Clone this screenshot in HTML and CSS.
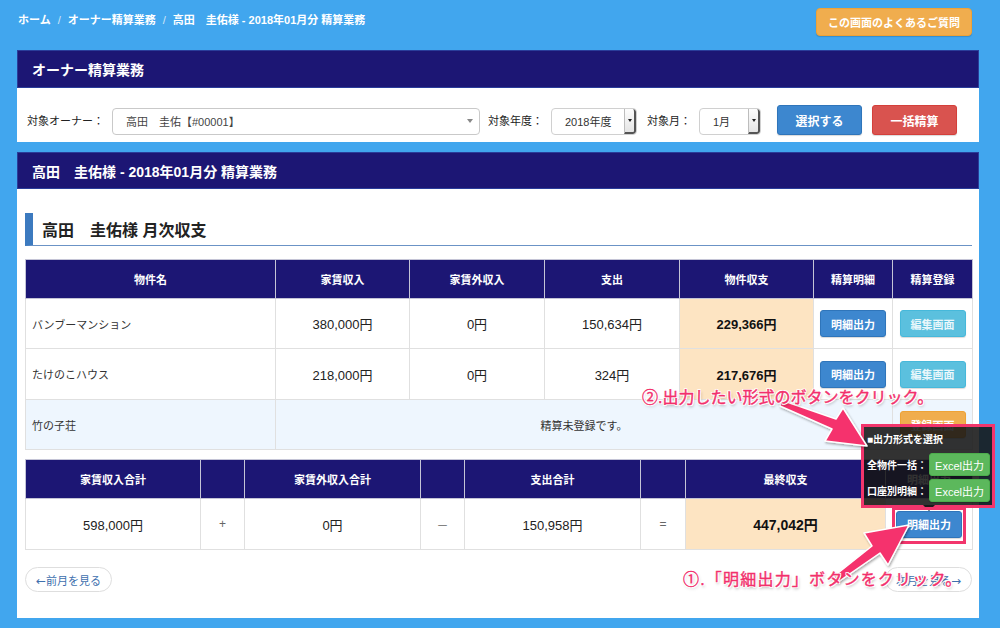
FILE: index.html
```html
<!DOCTYPE html>
<html lang="ja">
<head>
<meta charset="utf-8">
<title>オーナー精算業務</title>
<link rel="stylesheet" href="styles.css">
</head>
<body>
<div class="page">
  <header class="topbar">
    <ol class="crumbs">
      <li>ホーム</li><li class="sep">/</li><li>オーナー精算業務</li><li class="sep">/</li><li>高田　圭佑様 - 2018年01月分 精算業務</li>
    </ol>
    <button class="btn btn-faq">この画面のよくあるご質問</button>
  </header>

  <section class="panel">
    <h2 class="panel-head">オーナー精算業務</h2>
    <div class="filter">
      <span class="flabel">対象オーナー：</span>
      <div class="select owner"><span class="val">高田　圭佑【#00001】</span><span class="caret"></span></div>
      <span class="flabel">対象年度：</span>
      <div class="mselect year"><span class="val">2018年度</span><span class="stepper"></span></div>
      <span class="flabel">対象月：</span>
      <div class="mselect month"><span class="val">1月</span><span class="stepper"></span></div>
      <button class="btn btn-primary btn-lg">選択する</button>
      <button class="btn btn-danger btn-lg">一括精算</button>
    </div>
  </section>

  <section class="panel panel-main">
    <h2 class="panel-head head2">高田　圭佑様 - 2018年01月分 精算業務</h2>
    <div class="panel-body">
      <h3 class="sec-title">高田　圭佑様 月次収支</h3>

      <table class="grid props">
        <colgroup>
          <col style="width:250px"><col style="width:134px"><col style="width:135px"><col style="width:135px"><col style="width:134px"><col style="width:79px"><col style="width:80px">
        </colgroup>
        <thead>
          <tr><th>物件名</th><th>家賃収入</th><th>家賃外収入</th><th>支出</th><th>物件収支</th><th>精算明細</th><th>精算登録</th></tr>
        </thead>
        <tbody>
          <tr>
            <td class="name">バンブーマンション</td><td class="num">380,000円</td><td class="num">0円</td><td class="num">150,634円</td><td class="num bal">229,366円</td>
            <td><button class="btn btn-primary">明細出力</button></td><td><button class="btn btn-info">編集画面</button></td>
          </tr>
          <tr>
            <td class="name">たけのこハウス</td><td class="num">218,000円</td><td class="num">0円</td><td class="num">324円</td><td class="num bal">217,676円</td>
            <td><button class="btn btn-primary">明細出力</button></td><td><button class="btn btn-info">編集画面</button></td>
          </tr>
          <tr class="unreg">
            <td class="name">竹の子荘</td><td colspan="5" class="note">精算未登録です。</td>
            <td><button class="btn btn-warning">登録画面</button></td>
          </tr>
        </tbody>
      </table>

      <table class="grid totals">
        <colgroup>
          <col style="width:175px"><col style="width:44px"><col style="width:176px"><col style="width:44px"><col style="width:176px"><col style="width:45px"><col style="width:200px"><col style="width:87px">
        </colgroup>
        <thead>
          <tr><th>家賃収入合計</th><th></th><th>家賃外収入合計</th><th></th><th>支出合計</th><th></th><th>最終収支</th><th>明細出力</th></tr>
        </thead>
        <tbody>
          <tr>
            <td class="num">598,000円</td><td class="op">+</td><td class="num">0円</td><td class="op">－</td><td class="num">150,958円</td><td class="op">=</td><td class="num final">447,042円</td>
            <td><button class="btn btn-primary">明細出力</button></td>
          </tr>
        </tbody>
      </table>

      <nav class="pager">
        <button class="pill"><span class="arr">←</span>前月を見る</button>
        <button class="pill">次月を見る<span class="arr">→</span></button>
      </nav>
    </div>
  </section>

  <div class="popup">
    <div class="pop-title">■出力形式を選択</div>
    <div class="pop-row"><span>全物件一括：</span><button class="btn btn-success">Excel出力</button></div>
    <div class="pop-row"><span>口座別明細：</span><button class="btn btn-success">Excel出力</button></div>
  </div>
  <div class="pop-tip"></div>
  <div class="hilite"></div>

  <svg class="arrows" width="1000" height="628" viewBox="0 0 1000 628">
    <g fill="#f5336d" stroke="#fff" stroke-width="1.5" stroke-linejoin="round" filter="url(#sh)">
      <polygon points="781,400 836,419 843,408 867,446 825,441 832,429 780,406"/>
      <polygon points="833,577 872,546 864,533 909,525 888,565 880,553 838,582"/>
    </g>
    <defs>
      <filter id="sh" x="-20%" y="-20%" width="140%" height="140%">
        <feDropShadow dx="1" dy="1.5" stdDeviation="1.2" flood-color="#000" flood-opacity="0.35"/>
      </filter>
    </defs>
  </svg>

  <p class="note-callout c2">②.出力したい形式のボタンをクリック。</p>
  <p class="note-callout c1">①.「明細出力」ボタンをクリック。</p>
</div>
</body>
</html>
```

FILE: styles.css
```css
* { box-sizing: border-box; }

html, body {
  margin: 0;
  padding: 0;
}

body {
  background: #41a6ee;
  font-family: "Liberation Sans", "Noto Sans CJK JP", sans-serif;
  color: #333;
}

.page {
  position: relative;
  width: 1000px;
  height: 628px;
  overflow: hidden;
}

/* ---------- top bar ---------- */
.topbar {
  display: flex;
  justify-content: space-between;
  align-items: flex-start;
  height: 50px;
  padding: 8px 28px 0 18px;
}

.crumbs {
  list-style: none;
  margin: 5px 0 0;
  padding: 0;
  display: flex;
  gap: 7px;
  color: #fff;
  font-size: 11px;
  font-weight: bold;
  line-height: 15px;
}

.crumbs .sep {
  color: #d5e6f7;
  font-weight: normal;
}

/* ---------- buttons ---------- */
.btn {
  font-family: inherit;
  font-size: 11px;
  font-weight: bold;
  color: #fff;
  border: 1px solid transparent;
  border-radius: 3px;
  height: 27px;
  padding: 0 9px;
  white-space: nowrap;
  cursor: pointer;
  box-shadow: 0 1px 1px rgba(0, 0, 0, 0.15);
}

.btn-faq {
  height: 28px;
  padding: 0 11px;
  background: #f0ad4e;
  border-color: #eea236;
  border-radius: 4px;
}

.btn-primary { background: #3d87cf; border-color: #2f75ba; }
.btn-info { background: #5bc0de; border-color: #46b8da; color: #eaf7fb; }
.btn-warning { background: #f0ad4e; border-color: #eea236; }
.btn-danger { background: #d9534f; border-color: #d43f3a; }
.btn-success { background: #5cb85c; border-color: #4cae4c; font-weight: normal; height: 23px; padding: 0 3px; }

.btn-lg {
  height: 30px;
  width: 85px;
  font-size: 12px;
}

/* ---------- panels ---------- */
.panel {
  margin: 0 21px 10px 17px;
  background: #fff;
}

.panel-head {
  margin: 0;
  height: 38px;
  display: flex;
  align-items: center;
  padding-left: 14px;
  background: #1c1674;
  border: 1px solid #2a3d9a;
  color: #fff;
  font-size: 14px;
  font-weight: bold;
}

.panel-head.head2 { height: 37px; }

.filter {
  display: flex;
  align-items: center;
  padding: 17px 0 7px 10px;
  height: 54px;
}

.flabel {
  font-size: 11px;
  color: #222;
  margin-right: 8px;
}

.select {
  display: flex;
  align-items: center;
  height: 27px;
  border: 1px solid #c9c9c9;
  border-radius: 4px;
  background: #fff;
  margin-right: 8px;
  margin-top: 2px;
}

.select.owner { width: 368px; }

.select .val {
  flex: 1;
  padding-left: 13px;
  font-size: 11px;
  color: #444;
}

.select .caret {
  width: 0;
  height: 0;
  margin-right: 6px;
  border-left: 3px solid transparent;
  border-right: 3px solid transparent;
  border-top: 4px solid #888;
}

.mselect {
  display: flex;
  height: 27px;
  border: 1px solid #d0d0d0;
  border-radius: 4px;
  background: #fff;
  margin-right: 10px;
  margin-top: 2px;
  overflow: hidden;
}

.mselect.year { width: 86px; }
.mselect.month { width: 62px; margin-right: 16px; }

.mselect .val {
  flex: 1;
  display: flex;
  align-items: center;
  padding-left: 13px;
  font-size: 11px;
  color: #333;
}

.mselect .stepper {
  width: 12px;
  display: flex;
  align-items: center;
  justify-content: center;
  background: linear-gradient(#fdfdfd, #e4e4e4);
  border-left: 1px solid #bdbdbd;
  border-right: 2px solid #555;
  border-bottom: 2px solid #555;
  border-radius: 0 3px 3px 0;
}

.mselect .stepper::after {
  content: "";
  border-left: 2.5px solid transparent;
  border-right: 2.5px solid transparent;
  border-top: 3px solid #222;
}

.filter .btn-danger { margin-left: 10px; }

/* ---------- main panel ---------- */
.panel-body {
  padding: 24px 7px 26px 8px;
}

.sec-title {
  margin: 0 0 13px;
  height: 33px;
  display: flex;
  align-items: center;
  padding-left: 9px;
  border-left: 8px solid #3c7abf;
  border-bottom: 1px solid #6b93c6;
  font-size: 16px;
  font-weight: bold;
  color: #222;
}

.grid {
  width: 947px;
  table-layout: fixed;
  border-collapse: collapse;
  border: 1px solid #dcdcdc;
}

.grid th {
  height: 39px;
  background: #1c1674;
  border: 1px solid #c4c4d6;
  color: #fff;
  font-size: 11px;
  font-weight: bold;
  text-align: center;
  padding: 0;
}

.grid td {
  border: 1px solid #e0e0e0;
  font-size: 11px;
  color: #333;
  text-align: center;
  padding: 0;
}

.props tbody tr { height: 50px; }
.props tbody tr:nth-child(2) { height: 51px; }

.grid td.name {
  text-align: left;
  padding-left: 6px;
  font-size: 11px;
}

.grid td.num {
  font-size: 13px;
  color: #222;
}

.grid td.bal {
  background: #fde4c2;
  font-weight: bold;
  color: #111;
}

.grid td.final {
  background: #fde4c2;
  font-weight: bold;
  font-size: 14px;
  color: #111;
}

.grid td .btn { width: 66px; padding: 0; }

.grid tr.unreg td { background: #eef6fe; }

.grid td.note { font-size: 11px; }

.grid td.op {
  font-size: 12px;
  color: #666;
}

.totals { margin-top: 9px; }
.totals tbody tr { height: 51px; }

.pager {
  display: flex;
  justify-content: space-between;
  margin-top: 17px;
  width: 947px;
}

.pill {
  height: 25px;
  padding: 0 10px;
  border: 1px solid #dedede;
  border-radius: 13px;
  background: #fff;
  color: #3e6fae;
  font-family: inherit;
  font-size: 11px;
}

.pill .arr {
  font-family: "DejaVu Sans", sans-serif;
  font-size: 12px;
}

/* ---------- overlay: popup & annotations ---------- */
.popup {
  position: absolute;
  left: 861px;
  top: 424px;
  width: 134px;
  height: 84px;
  border: 3px solid #f2356c;
  background: rgba(22, 22, 22, 0.88);
  padding: 3px 2px 0 3px;
  display: flex;
  flex-direction: column;
  gap: 3px;
}

.pop-title {
  color: #fff;
  font-size: 10px;
  font-weight: bold;
  line-height: 20px;
}

.pop-row {
  display: flex;
  justify-content: space-between;
  align-items: center;
  color: #fff;
  font-size: 10px;
  font-weight: bold;
}

.pop-row .btn { width: 61px; font-size: 11px; }

.pop-tip {
  position: absolute;
  left: 923px;
  top: 505px;
  width: 0;
  height: 0;
  border-left: 6px solid transparent;
  border-right: 6px solid transparent;
  border-top: 6px solid #1a1a1a;
}

.hilite {
  position: absolute;
  left: 892px;
  top: 507px;
  width: 74px;
  height: 37px;
  border: 3px solid #f2356c;
}

.arrows {
  position: absolute;
  left: 0;
  top: 0;
  pointer-events: none;
}

.note-callout {
  position: absolute;
  margin: 0;
  color: #f2306c;
  font-size: 16px;
  line-height: 18px;
  white-space: nowrap;
  -webkit-text-stroke: 0.4px #f2306c;
  text-shadow: 1px 0 0 #fff, -1px 0 0 #fff, 0 1px 0 #fff, 0 -1px 0 #fff,
    1px 1px 0 #fff, -1px -1px 0 #fff, 1px -1px 0 #fff, -1px 1px 0 #fff,
    1px 2px 3px rgba(0, 0, 0, 0.35);
}

.note-callout.c2 { left: 642px; top: 389px; }
.note-callout.c1 { left: 683px; top: 571px; letter-spacing: 1.2px; }
```
